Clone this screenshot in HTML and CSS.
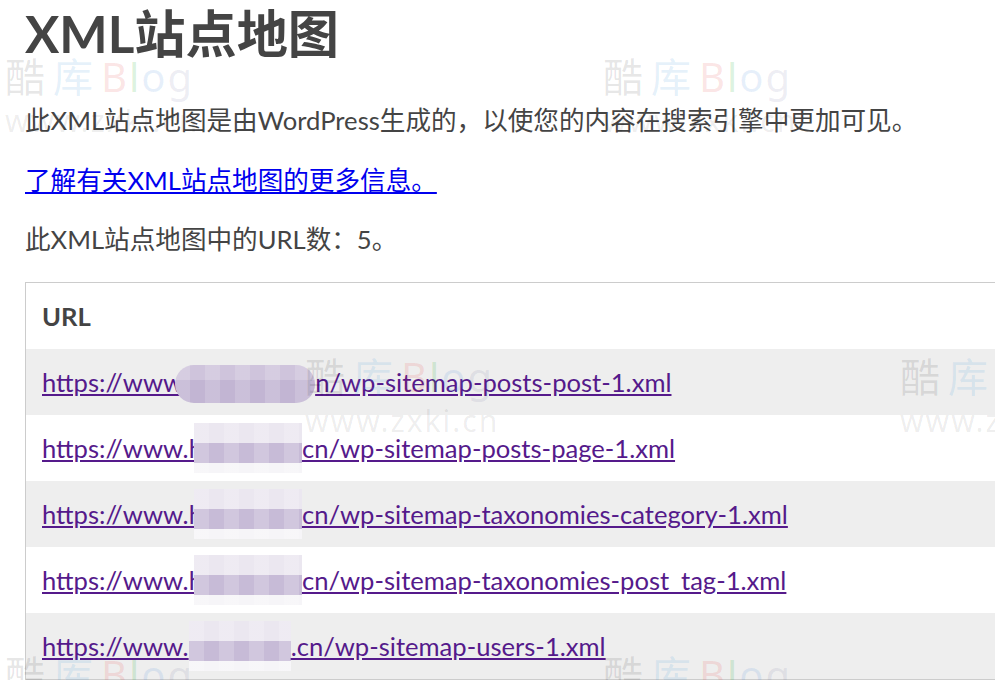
FILE: index.html
```html
<!DOCTYPE html>
<html lang="zh-CN">
<head>
<meta charset="UTF-8">
<title>XML站点地图</title>
<link rel="stylesheet" href="styles.css">
</head>
<body>
<div id="sitemap">
  <div class="sitemap-header">
    <h1>XML站点地图</h1>
    <p>此XML站点地图是由WordPress生成的，以使您的内容在搜索引擎中更加可见。</p>
    <p><a class="more" href="https://www.sitemaps.org/">了解有关XML站点地图的更多信息。</a></p>
  </div>
  <div class="sitemap-content">
    <p class="count">此XML站点地图中的URL数：5。</p>
    <table class="sitemap-table">
      <thead>
        <tr><th>URL</th></tr>
      </thead>
      <tbody>
        <tr><td class="loc"><a href="#">https://www<span class="mask mask-first"></span>n/wp-sitemap-posts-post-1.xml</a></td></tr>
        <tr><td class="loc"><a href="#">https://www.h<span class="mask"></span>cn/wp-sitemap-posts-page-1.xml</a></td></tr>
        <tr><td class="loc"><a href="#">https://www.h<span class="mask"></span>cn/wp-sitemap-taxonomies-category-1.xml</a></td></tr>
        <tr><td class="loc"><a href="#">https://www.h<span class="mask"></span>cn/wp-sitemap-taxonomies-post_tag-1.xml</a></td></tr>
        <tr><td class="loc"><a href="#">https://www.<span class="mask mask-last"></span>.cn/wp-sitemap-users-1.xml</a></td></tr>
      </tbody>
    </table>
  </div>
</div>

<!-- watermark overlay -->
<div class="wm wm-a"><div class="wm-logo"><span class="k1">酷</span><span class="k2">库</span><span class="b">B</span><span class="l">l</span><span class="o">o</span><span class="g">g</span></div><div class="wm-url">www.zxki.cn</div></div>
<div class="wm wm-b"><div class="wm-logo"><span class="k1">酷</span><span class="k2">库</span><span class="b">B</span><span class="l">l</span><span class="o">o</span><span class="g">g</span></div><div class="wm-url">www.zxki.cn</div></div>
<div class="wm wm-c"><div class="wm-logo"><span class="k1">酷</span><span class="k2">库</span><span class="b">B</span><span class="l">l</span><span class="o">o</span><span class="g">g</span></div><div class="wm-url">www.zxki.cn</div></div>
<div class="wm wm-d"><div class="wm-logo"><span class="k1">酷</span><span class="k2">库</span><span class="b">B</span><span class="l">l</span><span class="o">o</span><span class="g">g</span></div><div class="wm-url">www.zxki.cn</div></div>
<div class="wm wm-e"><div class="wm-logo"><span class="k1">酷</span><span class="k2">库</span><span class="b">B</span><span class="l">l</span><span class="o">o</span><span class="g">g</span></div><div class="wm-url">www.zxki.cn</div></div>
<div class="wm wm-f"><div class="wm-logo"><span class="k1">酷</span><span class="k2">库</span><span class="b">B</span><span class="l">l</span><span class="o">o</span><span class="g">g</span></div><div class="wm-url">www.zxki.cn</div></div>
</body>
</html>
```

FILE: styles.css
```css
html { overflow: hidden; }
body { font-family: Lato, "Noto Sans CJK SC", sans-serif; color: #444; margin: 0; position: relative; font-size: 25.6px; line-height: 34px; }
#sitemap { padding-left: 25px; width: 1470px; }
h1 { font-size: 51.2px; line-height: 66px; font-weight: 700; margin: 0 0 37px; }
p { margin: 25.6px 0; }
a { color: #551a8b; }
a.more { color: #0000ee; }
.sitemap-table { width: 100%; border: solid 1px #ccc; border-collapse: collapse; }
.sitemap-table th { text-align: left; }
.sitemap-table td, .sitemap-table th { padding: 16px; }
.sitemap-table tbody tr:nth-child(odd) td { background-color: #eee; }
a:hover { text-decoration: none; }

/* pixelated blur over the domain */
.mask { display: inline-block; width: 108px; height: 50px; margin: -8px 0 -8px -9px; vertical-align: top;
  background:
    repeating-linear-gradient(90deg, rgba(255,255,255,.18) 0 15px, rgba(255,255,255,0) 15px 30px),
    linear-gradient(#ebe7f0 0 40%, #c7bbd7 40% 80%, #f6f5f8 80%); }
.mask-first { width: 140px; height: 38px; margin: 0 0 -4px -8px; vertical-align: top; border-radius: 19px;
  background:
    repeating-linear-gradient(90deg, rgba(255,255,255,.15) 0 15px, rgba(255,255,255,0) 15px 30px),
    linear-gradient(#cfc4dc 0 40%, #c2b5d3 40%); }
.mask-last { width: 102px; margin-left: 0; }

/* watermark */
.wm { position: absolute; pointer-events: none; font-family: "Noto Sans", "Noto Sans CJK SC", sans-serif; }
.wm-a { left: 5px; top: 53px; }
.wm-b { left: 603px; top: 53px; }
.wm-c { left: 305px; top: 353px; }
.wm-d { left: 900px; top: 353px; }
.wm-e { left: 5px; top: 651px; }
.wm-f { left: 603px; top: 651px; }
.wm-logo { font-size: 40px; line-height: 48px; white-space: nowrap; }
.wm-logo .k1, .wm-logo .k2 { margin-right: 8px; }
.wm-logo .b, .wm-logo .l, .wm-logo .o { margin-right: 2px; }
.k1 { color: rgba(0, 0, 0, .1); }
.k2 { color: rgba(60, 150, 220, .14); }
.b { color: rgba(230, 60, 60, .14); }
.l { color: rgba(40, 180, 60, .18); }
.o { color: rgba(60, 130, 220, .12); }
.g { color: rgba(80, 80, 140, .1); }
.wm-url { font-size: 30px; line-height: 36px; letter-spacing: 2px; margin-top: 2px; color: rgba(0, 0, 0, .08); white-space: nowrap; }
```
